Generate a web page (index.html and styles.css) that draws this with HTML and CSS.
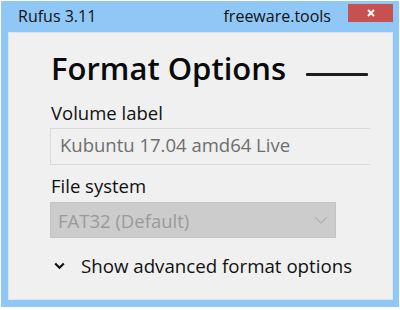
FILE: index.html
```html
<!DOCTYPE html>
<html>
<head>
<meta charset="utf-8">
<link rel="stylesheet" href="styles.css">
</head>
<body>
<div class="window">
  <div class="titlebar">
    <span class="title">Rufus 3.11</span>
    <span class="site">freeware.tools</span>
    <span class="close"><svg width="10" height="10" viewBox="0 0 10 10"><path d="M2 2L8 8M8 2L2 8" stroke="#fff" stroke-width="2"/></svg></span>
  </div>
  <div class="panel">
    <div class="heading-row">
      <h1 class="heading">Format Options</h1>
      <span class="rule"></span>
    </div>
    <div class="label label-volume">Volume label</div>
    <div class="input">Kubuntu 17.04 amd64 Live</div>
    <div class="label label-fs">File system</div>
    <div class="select">
      <span>FAT32 (Default)</span>
      <svg class="select-arrow" width="14" height="8" viewBox="0 0 14 8"><path d="M1 1L7 7L13 1" fill="none" stroke="#b4b4b4" stroke-width="1.5"/></svg>
    </div>
    <div class="advanced">
      <svg class="adv-arrow" width="11" height="8" viewBox="0 0 11 8"><path d="M1.2 1.5L5.5 5.8L9.8 1.5" fill="none" stroke="#111" stroke-width="2.2"/></svg>
      <span>Show advanced format options</span>
    </div>
  </div>
</div>
</body>
</html>
```
FILE: styles.css
```css
html, body {
  margin: 0;
  padding: 0;
  background: #ffffff;
  width: 400px;
  height: 310px;
  overflow: hidden;
}
body {
  font-family: "Open Sans", "Noto Sans", sans-serif;
  color: #111;
}
.window {
  margin-left: 1px;
  margin-top: 1px;
  width: 398px;
  height: 306px;
  background: #8fc8f7;
  display: flex;
  flex-direction: column;
}
.titlebar {
  height: 31px;
  display: flex;
  align-items: flex-start;
}
.title {
  margin-left: 17px;
  margin-top: 5px;
  font-size: 16px;
  line-height: 20px;
}
.site {
  margin-left: auto;
  margin-top: 5px;
  margin-right: 17px;
  font-size: 16px;
  line-height: 20px;
}
.close {
  width: 45px;
  height: 18px;
  margin-top: 3px;
  margin-right: 6px;
  background: #c75050;
  display: flex;
  align-items: center;
  justify-content: center;
}
.panel {
  flex: 1;
  margin: 0 6px 7px 7px;
  background: #f0f0f0;
  border: 1px solid #e3e3e3;
  padding-left: 42px;
  display: flex;
  flex-direction: column;
  align-items: flex-start;
}
.heading-row {
  display: flex;
  align-items: flex-start;
  margin-top: 15px;
  height: 40px;
}
.heading {
  margin: 0;
  font-size: 31px;
  font-weight: 600;
  line-height: 40px;
  color: #0a0a0a;
}
.rule {
  width: 62px;
  height: 3px;
  background: #1e1e1e;
  border-radius: 1px;
  margin-left: 20px;
  margin-top: 25px;
}
.label {
  font-size: 18.5px;
  line-height: 24px;
  color: #111;
}
.label-volume {
  margin-top: 13px;
}
.input {
  box-sizing: border-box;
  margin-top: 3px;
  margin-left: -1px;
  width: 320px;
  height: 37px;
  border: 1px solid #dadada;
  border-right: none;
  padding-left: 9px;
  padding-bottom: 3px;
  font-size: 18.5px;
  line-height: 32px;
  color: #6e6e6e;
  background: #f0f0f0;
}
.label-fs {
  margin-top: 9px;
}
.select {
  box-sizing: border-box;
  margin-top: 4px;
  margin-left: -1px;
  width: 286px;
  height: 36px;
  border: 1px solid #c4c4c4;
  background: #cccccc;
  padding-left: 7px;
  display: flex;
  align-items: center;
  font-size: 18.5px;
  color: #9a9a9a;
}
.select-arrow {
  margin-left: auto;
  margin-right: 7px;
}
.advanced {
  margin-top: 16px;
  display: flex;
  align-items: center;
  font-size: 18.7px;
  line-height: 24px;
}
.adv-arrow {
  margin-left: 3px;
  margin-right: 16px;
}
```
